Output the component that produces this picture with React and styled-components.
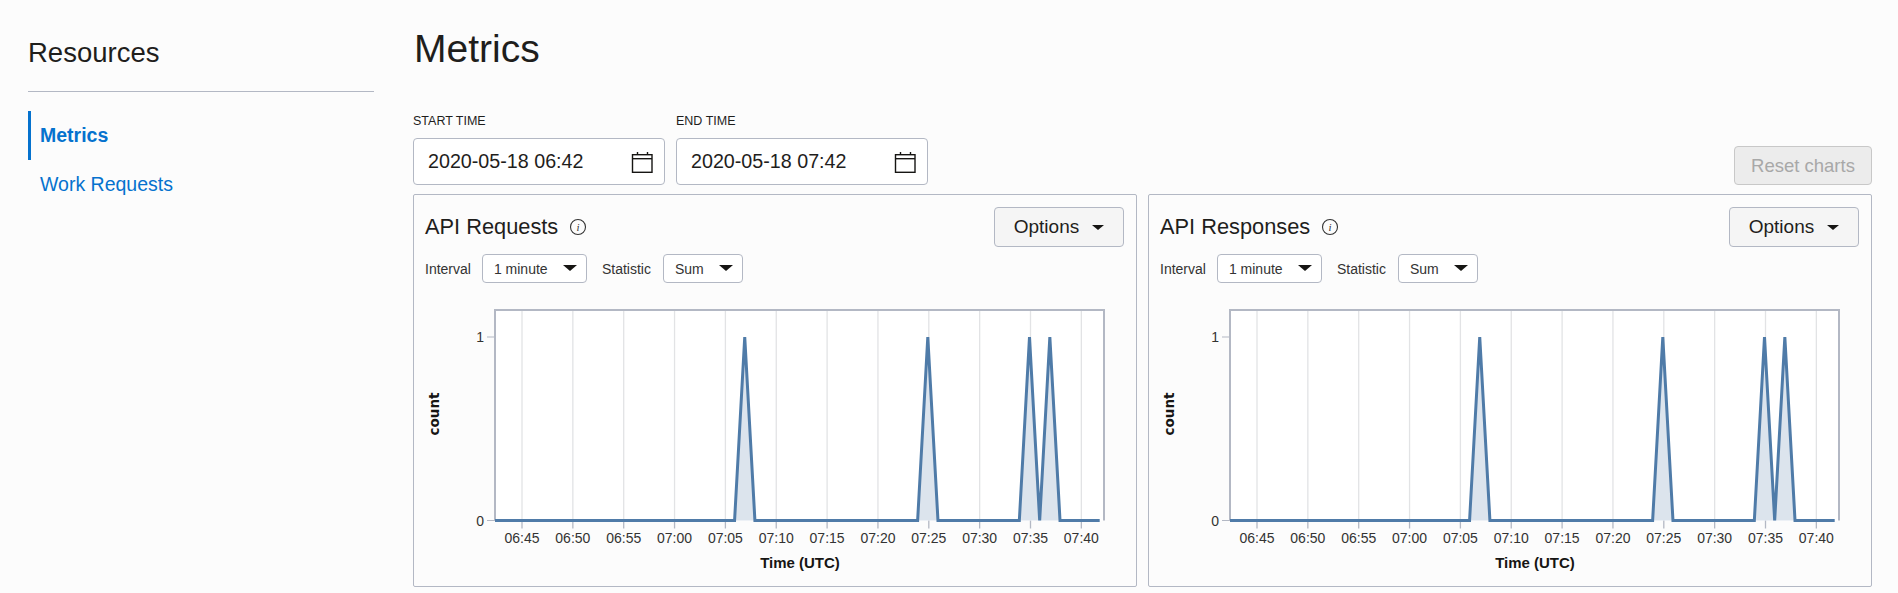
import styled, { createGlobalStyle } from "styled-components";

const GlobalStyle = createGlobalStyle`
  html, body {
    margin: 0;
    height: 100%;
    overflow: hidden;
    background: #fcfcfc;
  }
  body {
    font-family: "Liberation Sans", Arial, sans-serif;
    color: #1f1e1c;
  }
`;

const Page = styled.div`
  display: flex;
  height: 593px;
  overflow: hidden;
  padding: 0 26px 0 28px;
`;

const Sidebar = styled.aside`
  width: 346px;
  flex: none;
  margin-right: 39px;
  padding-top: 37px;
`;

const SideTitle = styled.h2`
  margin: 0;
  font-size: 27.5px;
  font-weight: 400;
  line-height: 32px;
  padding-bottom: 21.5px;
  border-bottom: 1px solid #b3b8c4;
  margin-bottom: 19px;
`;

const NavList = styled.ul`
  list-style: none;
  margin: 0;
  padding: 0;
`;

const NavItem = styled.li`
  height: 49px;
  display: flex;
  align-items: center;
  padding-left: 9px;
  font-size: 19.5px;
  color: #0572ce;
  font-weight: ${(props) => (props.$active ? 700 : 400)};
  border-left: 3px solid ${(props) => (props.$active ? "#0572ce" : "transparent")};
`;

const Main = styled.main`
  flex: 1;
  min-width: 0;
`;

const Heading = styled.h1`
  margin: 0;
  padding: 26px 0 0 1px;
  font-size: 39px;
  font-weight: 400;
  line-height: 46px;
  height: 85px;
  box-sizing: border-box;
  margin-bottom: 29px;
`;

const Controls = styled.div`
  display: flex;
  justify-content: space-between;
  align-items: flex-end;
  margin-bottom: 9px;
`;

const DateFields = styled.div`
  display: flex;
  gap: 11px;
`;

const FieldLabel = styled.label`
  display: block;
  font-size: 12.5px;
  line-height: 14px;
  margin-bottom: 10px;
  text-transform: uppercase;
`;

const DateBox = styled.div`
  width: 252px;
  height: 47px;
  box-sizing: border-box;
  display: flex;
  align-items: center;
  justify-content: space-between;
  padding: 0 10px 0 14px;
  background: #fff;
  border: 1px solid #b3b8c4;
  border-radius: 4px;
  font-size: 19.7px;
`;

const ResetButton = styled.button`
  width: 138px;
  height: 39px;
  padding: 0;
  font: inherit;
  font-size: 18.5px;
  color: #a8a8a8;
  background: #ececec;
  border: 1px solid #c8c8c8;
  border-radius: 4px;
`;

const Cards = styled.div`
  display: grid;
  grid-template-columns: 1fr 1fr;
  gap: 11px;
`;

const Card = styled.section`
  height: 393px;
  box-sizing: border-box;
  padding: 12px 12px 0 11px;
  border: 1px solid #b3b8c4;
  border-radius: 2px;
`;

const CardHeader = styled.div`
  display: flex;
  justify-content: space-between;
  align-items: center;
  height: 40px;
  margin-bottom: 7px;
`;

const CardTitle = styled.h3`
  display: flex;
  align-items: center;
  gap: 11px;
  margin: 0;
  font-size: 21.8px;
  font-weight: 400;
`;

const OptionsButton = styled.button`
  display: flex;
  align-items: center;
  justify-content: center;
  gap: 13px;
  width: 130px;
  height: 40px;
  padding: 0;
  font: inherit;
  font-size: 19px;
  color: #1f1e1c;
  background: #f5f5f5;
  border: 1px solid #b3b8c4;
  border-radius: 4px;
`;

const Filters = styled.div`
  display: flex;
  align-items: center;
  height: 29px;
  font-size: 14px;
  color: #333;
`;

const FilterLabel = styled.span`
  margin-right: ${(props) => props.$gap}px;
`;

const Select = styled.div`
  width: ${(props) => props.$width}px;
  height: 29px;
  box-sizing: border-box;
  display: flex;
  align-items: center;
  justify-content: space-between;
  padding: 0 9px 0 11px;
  margin-right: 15px;
  background: #fff;
  border: 1px solid #b3b8c4;
  border-radius: 4px;
`;

const Caret = styled.span`
  width: 0;
  height: 0;
  border-left: ${(props) => props.$size}px solid transparent;
  border-right: ${(props) => props.$size}px solid transparent;
  border-top: ${(props) => props.$size * 0.9}px solid #161513;
  margin-bottom: ${(props) => props.$lift || 0}px;
`;

const ChartSvg = styled.svg`
  display: block;
  margin-top: 17px;
  overflow: visible;
`;

const TICKS = ["06:45", "06:50", "06:55", "07:00", "07:05", "07:10", "07:15", "07:20", "07:25", "07:30", "07:35", "07:40"];
const PEAKS = [7, 25, 35, 37];

const PLOT = { left: 70, right: 679, top: 10, bottom: 220.5, one: 37 };
const FIRST_TICK = 97;
const PER_MINUTE = 10.17;

// minutes counted from 07:00 -> x in the svg, the data sits a pixel left of the ticks
const minuteX = (m) => FIRST_TICK - 1 + (m + 15) * PER_MINUTE;

const buildLine = () => {
  const pts = [[PLOT.left, PLOT.bottom]];
  PEAKS.forEach((m, i) => {
    if (PEAKS[i - 1] !== m - 2) pts.push([minuteX(m - 1), PLOT.bottom]);
    pts.push([minuteX(m), PLOT.one]);
    pts.push([minuteX(m + 1), PLOT.bottom]);
  });
  pts.push([minuteX(42) - 1, PLOT.bottom]);
  return pts.map((p) => p.join(",")).join(" ");
};

const Chart = () => {
  const line = buildLine();
  return (
    <ChartSvg width="699" height="285" viewBox="0 0 699 285">
      <rect x={PLOT.left} y={PLOT.top} width={PLOT.right - PLOT.left} height={PLOT.bottom - PLOT.top} fill="#fff" />
      {TICKS.map((label, i) => {
        const x = FIRST_TICK + i * 50.85;
        return (
          <g key={label}>
            <line x1={x} x2={x} y1={PLOT.top} y2={PLOT.bottom} stroke="#e2e3e5" strokeWidth="1.3" />
            <line x1={x} x2={x} y1={PLOT.bottom} y2={PLOT.bottom + 8} stroke="#b3b8c4" strokeWidth="1.3" />
            <text x={x} y="243" textAnchor="middle" fontSize="14" fill="#333" fontFamily="Liberation Sans">
              {label}
            </text>
          </g>
        );
      })}
      <polygon points={line} fill="#dce4ed" />
      <path d={`M${PLOT.left} ${PLOT.bottom} V${PLOT.top} H${PLOT.right} V${PLOT.bottom}`} fill="none" stroke="#b3b8c4" strokeWidth="2" />
      <line x1={PLOT.left - 8} x2={PLOT.left} y1={PLOT.one} y2={PLOT.one} stroke="#b3b8c4" />
      <line x1={PLOT.left - 8} x2={PLOT.left} y1={PLOT.bottom} y2={PLOT.bottom} stroke="#b3b8c4" />
      <text x={PLOT.left - 11} y={PLOT.one + 5} textAnchor="end" fontSize="14" fill="#333" fontFamily="Liberation Sans">1</text>
      <text x={PLOT.left - 11} y={PLOT.bottom + 5} textAnchor="end" fontSize="14" fill="#333" fontFamily="Liberation Sans">0</text>
      <polyline points={line} fill="none" stroke="#4f7ba8" strokeWidth="3" />
      <text transform="translate(14 114) rotate(-90)" textAnchor="middle" fontSize="13.5" fontWeight="700" fill="#161513" fontFamily="DejaVu Sans">count</text>
      <text x="375" y="268" textAnchor="middle" fontSize="15" fontWeight="700" fill="#161513" fontFamily="Liberation Sans">Time (UTC)</text>
    </ChartSvg>
  );
};

const CalendarIcon = () => (
  <svg width="24" height="24" viewBox="0 0 24 24" fill="none" stroke="#161513" strokeWidth="1.4">
    <rect x="2.5" y="4.7" width="19.5" height="17.6" />
    <path d="M2.5 8.7H22" />
    <path d="M7.5 2V5M17.5 2V5" />
  </svg>
);

const InfoIcon = () => (
  <svg width="18" height="18" viewBox="0 0 18 18">
    <circle cx="9" cy="9" r="7.5" fill="none" stroke="#333" strokeWidth="1.1" />
    <text x="9" y="13" textAnchor="middle" fontSize="11" fontStyle="italic" fill="#333" fontFamily="Liberation Serif">i</text>
  </svg>
);

const ChartCard = ({ title }) => (
  <Card>
    <CardHeader>
      <CardTitle>
        {title}
        <InfoIcon />
      </CardTitle>
      <OptionsButton>
        Options
        <Caret $size={6.5} />
      </OptionsButton>
    </CardHeader>
    <Filters>
      <FilterLabel $gap={11}>Interval</FilterLabel>
      <Select $width={105}>
        1 minute
        <Caret $size={7} $lift={2} />
      </Select>
      <FilterLabel $gap={12}>Statistic</FilterLabel>
      <Select $width={80}>
        Sum
        <Caret $size={7} $lift={2} />
      </Select>
    </Filters>
    <Chart />
  </Card>
);

const DateField = ({ label, value }) => (
  <div>
    <FieldLabel>{label}</FieldLabel>
    <DateBox>
      {value}
      <CalendarIcon />
    </DateBox>
  </div>
);

const App = () => (
  <Page>
    <GlobalStyle />
    <Sidebar>
      <SideTitle>Resources</SideTitle>
      <NavList>
        <NavItem $active>Metrics</NavItem>
        <NavItem>Work Requests</NavItem>
      </NavList>
    </Sidebar>
    <Main>
      <Heading>Metrics</Heading>
      <Controls>
        <DateFields>
          <DateField label="Start time" value="2020-05-18 06:42" />
          <DateField label="End time" value="2020-05-18 07:42" />
        </DateFields>
        <ResetButton disabled>Reset charts</ResetButton>
      </Controls>
      <Cards>
        <ChartCard title="API Requests" />
        <ChartCard title="API Responses" />
      </Cards>
    </Main>
  </Page>
);

export default App;
